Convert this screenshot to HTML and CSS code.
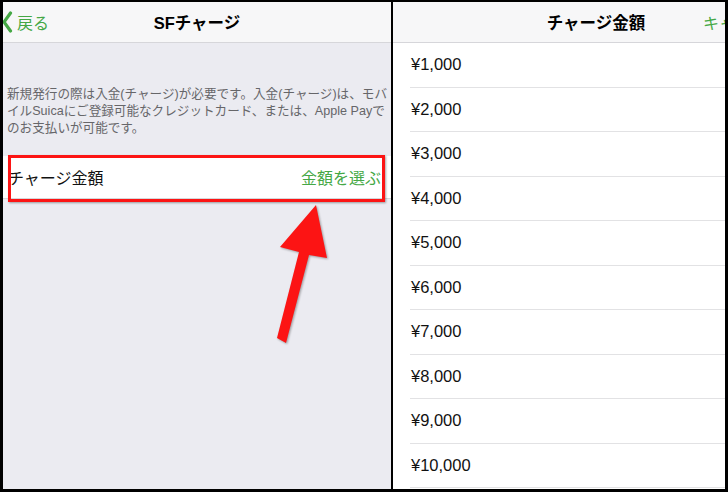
FILE: index.html
```html
<!DOCTYPE html>
<html lang="ja">
<head>
<meta charset="UTF-8">
<meta name="viewport" content="width=device-width, initial-scale=1.0">
<title>SFチャージ</title>
<link rel="stylesheet" href="styles.css">
</head>
<body>
<div class="screens">
  <!-- left: SF charge screen -->
  <div class="panel panel-left">
    <div class="navbar">
      <a class="nav-back">
        <svg class="chevron" width="11" height="22" viewBox="0 0 11 22">
          <path d="M8.5 2 L2 11 L8.5 20" fill="none" stroke="#45a845" stroke-width="3.2" stroke-linecap="round" stroke-linejoin="round"/>
        </svg>
        戻る
      </a>
      <div class="nav-title">SFチャージ</div>
      <div></div>
    </div>
    <p class="note">新規発行の際は入金(チャージ)が必要です。入金(チャージ)は、モバ<br>イルSuicaにご登録可能なクレジットカード、または、Apple Payで<br>のお支払いが可能です。</p>
    <div class="cell">
      <span>チャージ金額</span>
      <span class="cell-value">金額を選ぶ</span>
    </div>
    <div class="highlight"></div>
    <svg class="arrow" width="388" height="487" viewBox="0 0 388 487">
      <polygon points="313,203 324,256 306,253 283,341 274,336 296,250 277,245" fill="#fc1414"/>
    </svg>
  </div>

  <!-- right: amount picker -->
  <div class="panel panel-right">
    <div class="picker">
      <div class="navbar">
        <div></div>
        <div class="nav-title">チャージ金額</div>
        <a class="nav-cancel">キャンセル</a>
      </div>
      <ul class="amounts">
        <li><span>¥1,000</span></li>
        <li><span>¥2,000</span></li>
        <li><span>¥3,000</span></li>
        <li><span>¥4,000</span></li>
        <li><span>¥5,000</span></li>
        <li><span>¥6,000</span></li>
        <li><span>¥7,000</span></li>
        <li><span>¥8,000</span></li>
        <li><span>¥9,000</span></li>
        <li><span>¥10,000</span></li>
      </ul>
    </div>
  </div>
</div>
</body>
</html>
```

FILE: styles.css
```css
/* screenshot of two iPhone screens side by side */
body {
  margin: 0;
  background-color: #000;
  font-family: "Liberation Sans", "Noto Sans CJK JP", sans-serif;
}
.screens {
  display: flex;
  gap: 2px;
  padding: 2px 3px 3px 3px;
  height: 487px;
}
.panel {
  height: 487px;
  overflow: hidden;
  position: relative;
}
.panel-left {
  width: 388px;
  background-color: #ebebf1;
}
.panel-right {
  width: 332px;
  background-color: #fff;
}
.picker {
  width: 406px;
}
.navbar {
  display: grid;
  grid-template-columns: 1fr auto 1fr;
  align-items: center;
  height: 40px;
  background-color: #f7f7f8;
  border-bottom: 1px solid #d6d6da;
  font-size: 16px;
}
.nav-title {
  font-weight: bold;
  font-size: 16.5px;
  color: #000;
}
.nav-back {
  display: flex;
  align-items: center;
  gap: 4px;
  color: #45a845;
  font-size: 16px;
}
.chevron {
  display: block;
  margin-left: -1px;
}
.nav-cancel {
  justify-self: end;
  margin-right: 16px;
  color: #45a845;
}
.note {
  margin: 43px 0 0 0;
  padding: 0 4px;
  font-size: 12.6px;
  line-height: 17px;
  color: #666669;
  white-space: nowrap;
}
.cell {
  display: flex;
  justify-content: space-between;
  align-items: center;
  margin-top: 19px;
  height: 42px;
  padding: 0 10px 0 5px;
  background-color: #fff;
  border-bottom: 1px solid #d6d6da;
  font-size: 16px;
  color: #111;
}
.cell-value {
  color: #45a845;
}
.highlight {
  position: absolute;
  left: 5px;
  top: 153px;
  width: 371px;
  height: 41px;
  border: 3px solid #fc1414;
  box-shadow: 1px 1px 2px rgba(0, 0, 0, 0.35);
}
.arrow {
  position: absolute;
  left: 0;
  top: 0;
  filter: drop-shadow(1px 1px 1px rgba(0, 0, 0, 0.35));
}
.amounts {
  list-style: none;
  margin: 0;
  padding: 0;
}
.amounts li {
  padding-left: 17px;
}
.amounts li span {
  display: flex;
  align-items: center;
  height: 43.5px;
  padding-left: 1px;
  border-bottom: 1px solid #e2e2e4;
  font-size: 16.5px;
  color: #111;
}
```
